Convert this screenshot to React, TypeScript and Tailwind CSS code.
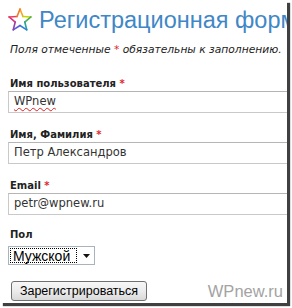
import React from 'react';

function RainbowStar() {
  // outline star, each edge tinted like the original rainbow icon
  const cx = 12;
  const cy = 12.5;
  const pts: [number, number][] = [];
  for (let i = 0; i < 10; i++) {
    const r = i % 2 === 0 ? 11.5 : 5;
    const a = -Math.PI / 2 + (i * Math.PI) / 5;
    pts.push([cx + r * Math.cos(a), cy + r * Math.sin(a)]);
  }
  const colors = [
    '#f5a623',
    '#c8d400',
    '#4caf50',
    '#26a69a',
    '#2f7fd8',
    '#5b5bd6',
    '#8e44ad',
    '#d63384',
    '#e8405a',
    '#f07a2a',
  ];
  return (
    <svg width="24" height="24" viewBox="0 0 24 24" className="shrink-0">
      {pts.map((p, i) => {
        const q = pts[(i + 1) % pts.length];
        return (
          <line
            key={i}
            x1={p[0]}
            y1={p[1]}
            x2={q[0]}
            y2={q[1]}
            stroke={colors[i]}
            strokeWidth="1.6"
            strokeLinecap="round"
          />
        );
      })}
    </svg>
  );
}

function Field({ label, value, spell }: { label: string; value: string; spell?: boolean }) {
  return (
    <div className="flex flex-col">
      <label className="pl-[2px] text-[10px] font-bold leading-[12px] text-[#222] [font-family:'DejaVu_Sans',sans-serif]">
        {label} <span className="text-[#e0262f]">*</span>
      </label>
      <div className="mt-[1px] flex h-[22px] w-[300px] items-center border border-[#c9c9c9] border-t-[#b5b5b5] bg-white pl-[5px] text-[11.5px] text-[#333] [font-family:'DejaVu_Sans',sans-serif]">
        <span className={spell ? 'underline decoration-wavy decoration-[#e02020] decoration-1 underline-offset-2' : ''}>
          {value}
        </span>
      </div>
    </div>
  );
}

export default function App() {
  return (
    <main className="h-[308px] w-[292px] bg-white">
      <div className="flex h-[303px] w-[287px] flex-col overflow-hidden bg-white pl-[8px] shadow-[3px_3px_1px_rgba(0,0,0,0.75)]">
        <div className="mt-[7px] flex h-[26px] items-center gap-[7px] whitespace-nowrap">
          <RainbowStar />
          <h1 className="text-[23.5px] leading-[26px] text-[#3f87c6] [font-family:'Liberation_Sans',Arial,sans-serif]">
            Регистрационная форма
          </h1>
        </div>

        <p className="mt-[11px] whitespace-nowrap pl-[2px] text-[10.7px] italic leading-[12px] text-[#222] [font-family:'DejaVu_Sans',sans-serif]">
          Поля отмеченные <span className="text-[#e0262f]">*</span> обязательны к заполнению.
        </p>

        <div className="mt-[22px] flex flex-col gap-[16px]">
          <Field label="Имя пользователя" value="WPnew" spell />
          <Field label="Имя, Фамилия" value="Петр Александров" />
          <Field label="Email" value="petr@wpnew.ru" />
        </div>

        <div className="mt-[14px] flex flex-col">
          <span className="pl-[2px] text-[10px] font-bold leading-[12px] text-[#222] [font-family:'DejaVu_Sans',sans-serif]">
            Пол
          </span>
          <div className="mt-[5px] flex h-[19px] w-[87px] items-stretch border border-[#a9b3bd] bg-white">
            <div className="m-[1px] flex flex-1 items-center border border-dotted border-black pl-[2px] text-[14px] leading-none text-black [font-family:'Liberation_Sans',Arial,sans-serif]">
              Мужской
            </div>
            <div className="flex w-[16px] items-center justify-center">
              <svg width="7" height="4" viewBox="0 0 7 4">
                <path d="M0 0h7L3.5 4z" fill="#111" />
              </svg>
            </div>
          </div>
        </div>

        <div className="mt-[16px] flex items-start justify-between pr-[4px]">
          <button className="ml-[3px] h-[20px] w-[136px] rounded-[3px] border border-[#707070] bg-gradient-to-b from-[#f7f7f7] via-[#ececec] to-[#d9d9d9] text-[12.5px] leading-none text-black [font-family:'Liberation_Sans',Arial,sans-serif]">
            Зарегистрироваться
          </button>
          <span className="mt-[2px] text-[16.5px] leading-none text-[#a3a3a3] [font-family:'Liberation_Sans',Arial,sans-serif]">
            WPnew.ru
          </span>
        </div>
      </div>
    </main>
  );
}
